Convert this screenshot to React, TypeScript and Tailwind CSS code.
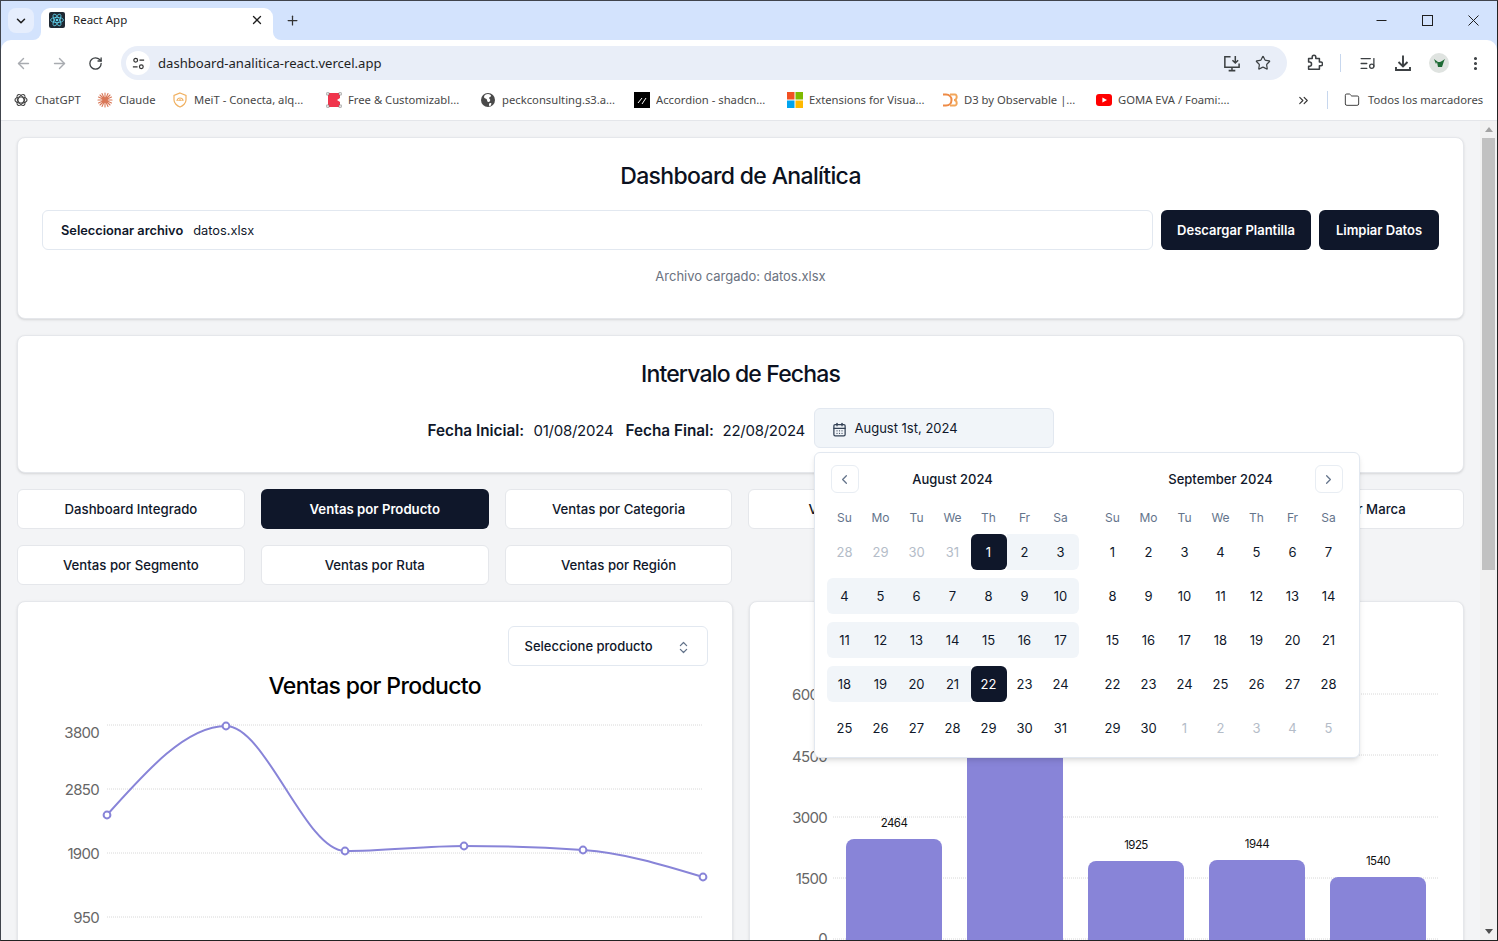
import React from "react";
import { ArrowLeft, ArrowRight, RotateCw, Star, EllipsisVertical, ChevronsRight, Folder, CalendarDays, ChevronLeft, ChevronRight, ChevronsUpDown, X, Plus, ChevronDown, ListMusic } from "lucide-react";

function monotonePath(p: [number, number][]) {
  const n = p.length;
  const d: number[] = [];
  for (let i = 0; i < n - 1; i++) d.push((p[i + 1][1] - p[i][1]) / (p[i + 1][0] - p[i][0]));
  const t: number[] = new Array(n).fill(0);
  for (let i = 1; i < n - 1; i++) {
    if (d[i - 1] * d[i] <= 0) t[i] = 0;
    else {
      const h0 = p[i][0] - p[i - 1][0];
      const h1 = p[i + 1][0] - p[i][0];
      const s = (d[i - 1] * h1 + d[i] * h0) / (h0 + h1);
      t[i] = (Math.sign(d[i - 1]) + Math.sign(d[i])) * Math.min(Math.abs(d[i - 1]), Math.abs(d[i]), 0.5 * Math.abs(s));
    }
  }
  t[0] = (3 * d[0] - t[1]) / 2;
  t[n - 1] = (3 * d[n - 2] - t[n - 2]) / 2;
  let out = `M${p[0][0]},${p[0][1]}`;
  for (let i = 0; i < n - 1; i++) {
    const h = (p[i + 1][0] - p[i][0]) / 3;
    out += `C${p[i][0] + h},${p[i][1] + h * t[i]} ${p[i + 1][0] - h},${p[i + 1][1] - h * t[i + 1]} ${p[i + 1][0]},${p[i + 1][1]}`;
  }
  return out;
}

const ReactIcon = () => (
  <svg viewBox="0 0 16 16" className="w-4 h-4 shrink-0">
    <rect width="16" height="16" rx="2" fill="#1f2933" />
    <g fill="none" stroke="#5fd3ee" strokeWidth="0.8">
      <ellipse cx="8" cy="8" rx="6.5" ry="2.6" />
      <ellipse cx="8" cy="8" rx="6.5" ry="2.6" transform="rotate(60 8 8)" />
      <ellipse cx="8" cy="8" rx="6.5" ry="2.6" transform="rotate(120 8 8)" />
    </g>
    <circle cx="8" cy="8" r="1.3" fill="#5fd3ee" />
  </svg>
);

const GptIcon = () => (
  <svg viewBox="0 0 16 16" className="w-4 h-4 shrink-0" fill="none" stroke="#444" strokeWidth="1.2">
    <ellipse cx="8" cy="8" rx="6" ry="3" />
    <ellipse cx="8" cy="8" rx="6" ry="3" transform="rotate(60 8 8)" />
    <ellipse cx="8" cy="8" rx="6" ry="3" transform="rotate(120 8 8)" />
  </svg>
);
const ClaudeIcon = () => (
  <svg viewBox="0 0 16 16" className="w-4 h-4 shrink-0" stroke="#d97757" strokeWidth="1.1" strokeLinecap="round">
    <path d="M8 1v14M1 8h14M3 3l10 10M13 3L3 13M5 1.5l6 13M11 1.5l-6 13M1.5 5l13 6M14.5 5l-13 6" />
  </svg>
);
const MeitIcon = () => (
  <svg viewBox="0 0 16 16" className="w-4 h-4 shrink-0" fill="none" stroke="#f0b060" strokeWidth="1.2">
    <path d="M8 1l6 2.5v4.5c0 3-3 6-6 7-3-1-6-4-6-7V3.5z" />
    <path d="M5 9a3 3 0 0 1 6 0M6.8 9a1.2 1.2 0 0 1 2.4 0" />
  </svg>
);
const FreeIcon = () => (
  <svg viewBox="0 0 16 16" className="w-4 h-4 shrink-0">
    <path d="M2 1h12v5l-3 2 3 2v5H2z" fill="#f0354c" />
    <g fill="#fff" stroke="#777" strokeWidth="0.6">
      <rect x="0.8" y="0.8" width="2.2" height="2.2" />
      <rect x="13" y="0.8" width="2.2" height="2.2" />
      <rect x="0.8" y="13" width="2.2" height="2.2" />
      <rect x="13" y="13" width="2.2" height="2.2" />
    </g>
  </svg>
);
const GlobeIcon = () => (
  <svg viewBox="0 0 16 16" className="w-4 h-4 shrink-0">
    <circle cx="8" cy="8" r="7" fill="#4a4a4a" />
    <path d="M8 2c2 0 3 1 3 2s-2 1-2 2 2 1 1 3-3 1-3-1-3-1-3-3 2-3 4-3zM10 11c1 0 2 0 1 2s-2 1-2 0 0-2 1-2z" fill="#fff" />
  </svg>
);
const ShadIcon = () => (
  <svg viewBox="0 0 16 16" className="w-4 h-4 shrink-0">
    <rect width="16" height="16" fill="#000" />
    <path d="M4 11l4-5M8 12l4-6" stroke="#fff" strokeWidth="1" />
  </svg>
);
const MsIcon = () => (
  <svg viewBox="0 0 16 16" className="w-4 h-4 shrink-0">
    <rect width="7.5" height="7.5" fill="#f25022" />
    <rect x="8.5" width="7.5" height="7.5" fill="#7fba00" />
    <rect y="8.5" width="7.5" height="7.5" fill="#00a4ef" />
    <rect x="8.5" y="8.5" width="7.5" height="7.5" fill="#ffb900" />
  </svg>
);
const D3Icon = () => (
  <svg viewBox="0 0 16 16" className="w-4 h-4 shrink-0" fill="none" stroke="#ee8a45" strokeWidth="2">
    <path d="M1 2.5h3c3.5 0 5.5 2.5 5.5 5.5s-2 5.5-5.5 5.5H1" />
    <path d="M8 2.5h5c2.4 0 2.4 5.5-1 5.5 3.4 0 3.4 5.5 1 5.5H8" stroke="#f2a65a" />
  </svg>
);
const YtIcon = () => (
  <svg viewBox="0 0 16 16" className="w-4 h-4 shrink-0">
    <rect x="0" y="2" width="16" height="12" rx="3" fill="#f00" />
    <path d="M6.4 5.4L11 8l-4.6 2.6z" fill="#fff" />
  </svg>
);

const bookmarks = [
  { icon: <GptIcon />, label: "ChatGPT", w: "w-[46px]" },
  { icon: <ClaudeIcon />, label: "Claude", w: "w-[37px]" },
  { icon: <MeitIcon />, label: "MeiT - Conecta, alq...", w: "w-[116px]" },
  { icon: <FreeIcon />, label: "Free & Customizabl...", w: "w-[116px]" },
  { icon: <GlobeIcon />, label: "peckconsulting.s3.a...", w: "w-[116px]" },
  { icon: <ShadIcon />, label: "Accordion - shadcn...", w: "w-[115px]" },
  { icon: <MsIcon />, label: "Extensions for Visua...", w: "w-[117px]" },
  { icon: <D3Icon />, label: "D3 by Observable |...", w: "w-[116px]" },
  { icon: <YtIcon />, label: "GOMA EVA / Foami:...", w: "w-[115px]" },
];

function ToolBtn({ children }: { children: React.ReactNode }) {
  return <div className="w-9 h-9 flex items-center justify-center text-[#3c4043] shrink-0">{children}</div>;
}

function BrowserChrome() {
  return (
    <div className="shrink-0 [font-family:'Noto_Sans',sans-serif]">
      <div className="h-[39px] bg-[#d3e3fd] flex items-end relative">
        <div className="ml-[7px] mb-[7px] w-[26px] h-[25px] rounded-lg bg-[#e6eefd] flex items-center justify-center">
          <ChevronDown size={14} strokeWidth={2.6} className="text-[#1f1f1f]" />
        </div>
        <div className="ml-[7px] w-[232px] h-[32px] bg-white rounded-t-[9px] flex items-center pl-2 pr-[9px] pb-2 gap-2 relative">
          <ReactIcon />
          <span className="text-[11.5px] text-[#1f1f1f] flex-1 whitespace-nowrap">React App</span>
          <X size={14} strokeWidth={2.2} className="text-[#1f1f1f]" />
          <div className="absolute bottom-0 -left-2 w-2 h-2 bg-white"><div className="w-2 h-2 bg-[#d3e3fd] rounded-br-lg" /></div>
          <div className="absolute bottom-0 -right-2 w-2 h-2 bg-white"><div className="w-2 h-2 bg-[#d3e3fd] rounded-bl-lg" /></div>
        </div>
        <Plus size={15} strokeWidth={2} className="ml-3 mb-[12px] text-[#333]" />
        <div className="ml-auto self-start flex text-[#1f1f1f]">
          <div className="w-[46px] h-[38px] flex items-center justify-center">
            <svg viewBox="0 0 11 11" className="w-[11px] h-[11px]" stroke="#1f1f1f" strokeWidth="1"><path d="M0.5 5.5h10" /></svg>
          </div>
          <div className="w-[46px] h-[38px] flex items-center justify-center">
            <svg viewBox="0 0 11 11" className="w-[11px] h-[11px]" fill="none" stroke="#1f1f1f" strokeWidth="1"><rect x="0.5" y="0.5" width="10" height="10" /></svg>
          </div>
          <div className="w-[46px] h-[38px] flex items-center justify-center mr-[1px]">
            <svg viewBox="0 0 11 11" className="w-[11px] h-[11px]" stroke="#1f1f1f" strokeWidth="1"><path d="M0.5 0.5l10 10M10.5 0.5l-10 10" /></svg>
          </div>
        </div>
      </div>
      <div className="bg-[#d3e3fd]">
        <div className="h-[42px] bg-white rounded-t-[10px] flex items-center pl-1 pt-1">
          <ToolBtn><ArrowLeft size={17} className="text-[#a8abb0]" /></ToolBtn>
          <ToolBtn><ArrowRight size={17} className="text-[#a8abb0]" /></ToolBtn>
          <ToolBtn><RotateCw size={15} strokeWidth={2.1} /></ToolBtn>
          <div className="ml-2 w-[1166px] h-[34px] rounded-full bg-[#e9eef8] flex items-center pl-[5px] pr-[8px] shrink-0">
            <div className="w-6 h-6 rounded-full bg-white flex items-center justify-center">
              <svg viewBox="0 0 16 16" className="w-[15px] h-[15px]" fill="none" stroke="#333" strokeWidth="1.3">
                <circle cx="5" cy="4.5" r="2" />
                <path d="M9 4.5h5M2 11.5h5" />
                <circle cx="11" cy="11.5" r="2" />
              </svg>
            </div>
            <span className="ml-[8px] pt-[2px] text-[13.1px] text-[#1f1f1f] whitespace-nowrap">dashboard-analitica-react.vercel.app</span>
            <div className="ml-auto flex items-center">
              <div className="w-8 flex justify-center text-[#3c4043]">
                <svg viewBox="0 0 20 20" className="w-[19px] h-[19px]" fill="none" stroke="#3c4043" strokeWidth="1.6">
                  <path d="M9 3H3v11h15V10M7 17.5h7M10.5 14v3.5" />
                  <path d="M14 2v7M11 6.5l3 3 3-3" />
                </svg>
              </div>
              <div className="w-8 flex justify-center text-[#3c4043]"><Star size={16} strokeWidth={1.8} /></div>
            </div>
          </div>
          <div className="ml-[9px]">
            <ToolBtn>
              <svg viewBox="0 0 20 20" className="w-[18px] h-[18px]" fill="none" stroke="#3c4043" strokeWidth="1.7" strokeLinejoin="round">
                <path d="M4 5h4V3.5a2 2 0 0 1 4 0V5h4v4h1.5a2 2 0 0 1 0 4H16v4H4v-3.5h1a2 2 0 0 0 0-4.5H4z" />
              </svg>
            </ToolBtn>
          </div>
          <div className="ml-[8px] mr-[8px] w-px h-[18px] bg-[#c7d7ee]" />
          <ToolBtn><ListMusic size={17} strokeWidth={1.8} /></ToolBtn>
          <ToolBtn>
            <svg viewBox="0 0 20 20" className="w-5 h-5" fill="none" stroke="#3c4043" strokeWidth="1.9">
              <path d="M10 2.5v10.5M5.5 9l4.5 4.5L14.5 9M3 14v3h14v-3" />
            </svg>
          </ToolBtn>
          <ToolBtn>
            <svg viewBox="0 0 20 20" className="w-5 h-5">
              <circle cx="10" cy="10" r="10" fill="#dfe3e0" />
              <path d="M5 6l2 5 1-2 1 5h4l2-6 1-2-3 2-2 1-2 0z" fill="#1e6b35" />
            </svg>
          </ToolBtn>
          <ToolBtn><EllipsisVertical size={17} strokeWidth={2.4} /></ToolBtn>
        </div>
      </div>
      <div className="h-[39px] bg-white border-b border-[#e4e6ea] flex items-center pl-3 pb-[2px] text-[11.25px] text-[#474747]">
        <div className="flex items-center gap-4">
          {bookmarks.map((b) => (
            <div key={b.label} className="flex items-center gap-[6px] shrink-0">
              {b.icon}
              <span className={`${b.w} whitespace-nowrap overflow-hidden`}>{b.label}</span>
            </div>
          ))}
        </div>
        <ChevronsRight size={15} strokeWidth={1.8} className="ml-[63px] text-[#333]" />
        <div className="ml-[16px] w-px h-[18px] bg-[#c7d7ee]" />
        <Folder size={16} strokeWidth={1.4} className="ml-[16px] text-[#333]" />
        <span className="ml-2 whitespace-nowrap">Todos los marcadores</span>
      </div>
    </div>
  );
}

const aug = [
  [28, 29, 30, 31, 1, 2, 3],
  [4, 5, 6, 7, 8, 9, 10],
  [11, 12, 13, 14, 15, 16, 17],
  [18, 19, 20, 21, 22, 23, 24],
  [25, 26, 27, 28, 29, 30, 31],
];
const sep = [
  [1, 2, 3, 4, 5, 6, 7],
  [8, 9, 10, 11, 12, 13, 14],
  [15, 16, 17, 18, 19, 20, 21],
  [22, 23, 24, 25, 26, 27, 28],
  [29, 30, 1, 2, 3, 4, 5],
];
const weekdays = ["Su", "Mo", "Tu", "We", "Th", "Fr", "Sa"];

function Month({ title, rows, kind }: { title: string; rows: number[][]; kind: "aug" | "sep" }) {
  return (
    <div className="w-[252px]">
      <div className="h-7 pt-[2px] flex items-center justify-center text-[13px] font-medium text-[#0f172a]">{title}</div>
      <div className="grid grid-cols-7 mt-[14px] h-[20px] pt-[1px] items-center">
        {weekdays.map((w) => (
          <div key={w} className="text-center text-[12px] text-[#64748b]">{w}</div>
        ))}
      </div>
      <div className="mt-[7px] flex flex-col gap-2">
        {rows.map((r, ri) => (
          <div key={ri} className="grid grid-cols-7">
            {r.map((d, i) => {
              const outside = kind === "aug" ? ri === 0 && i < 4 : ri === 4 && i > 1;
              const endpoint = kind === "aug" && ((ri === 0 && i === 4) || (ri === 3 && i === 4));
              const inRange = kind === "aug" && !outside && ((ri === 0 && i > 4) || ri === 1 || ri === 2 || (ri === 3 && i < 4));
              const first = inRange && i === 0;
              const last = inRange && i === 6;
              return (
                <div
                  key={i}
                  className={`h-9 pt-[2px] flex items-center justify-center text-[13px] ${
                    endpoint
                      ? "bg-[#0f172a] text-white rounded-md"
                      : inRange
                      ? `bg-[#f1f5f9] text-[#0f172a] ${first ? "rounded-l-md" : ""} ${last ? "rounded-r-md" : ""}`
                      : outside
                      ? "text-[#b4bcc8]"
                      : "text-[#0f172a]"
                  }`}
                >
                  {d}
                </div>
              );
            })}
          </div>
        ))}
      </div>
    </div>
  );
}

function DatePopover() {
  return (
    <div className="absolute left-0 top-[44px] z-20 w-[546px] h-[306px] bg-white border border-[#e2e8f0] rounded-md shadow-md p-3 flex gap-4">
      <Month title="August 2024" rows={aug} kind="aug" />
      <Month title="September 2024" rows={sep} kind="sep" />
      <div className="absolute left-4 top-3 w-7 h-7 border border-[#e8edf3] rounded-md flex items-center justify-center text-[#64748b]"><ChevronLeft size={15} /></div>
      <div className="absolute right-4 top-3 w-7 h-7 border border-[#e8edf3] rounded-md flex items-center justify-center text-[#64748b]"><ChevronRight size={15} /></div>
    </div>
  );
}

const tabs = [
  "Dashboard Integrado",
  "Ventas por Producto",
  "Ventas por Categoria",
  "Ventas por Canal",
  "",
  "Ventas por Marca",
  "Ventas por Segmento",
  "Ventas por Ruta",
  "Ventas por Región",
];

const linePts: [number, number][] = [[107, 815], [226, 726], [345, 851], [464, 846], [583, 850], [703, 877]];
const grid = "#d8d8d8";

function LineChart() {
  return (
    <svg viewBox="18 710 714 240" className="block w-[714px] h-[240px]">
      {[725, 789, 853, 917].map((y) => (
        <line key={y} x1="107" x2="702" y1={y} y2={y} stroke={grid} strokeDasharray="1 1" />
      ))}
      {[["3800", 738], ["2850", 795], ["1900", 859], ["950", 923]].map(([t, y]) => (
        <text key={t} x="99" y={y} textAnchor="end" fontSize="15" letterSpacing="-0.7" fill="#666">{t}</text>
      ))}
      <path d={monotonePath(linePts)} fill="none" stroke="#8884d8" strokeWidth="2" />
      {linePts.map(([x, y]) => (
        <circle key={x} cx={x} cy={y} r="3.4" fill="#fff" stroke="#8884d8" strokeWidth="2" />
      ))}
    </svg>
  );
}

const bars = [
  { x: 846, top: 839, label: "2464", ly: 827 },
  { x: 967, top: 700, label: "", ly: 0 },
  { x: 1088, top: 861, label: "1925", ly: 849 },
  { x: 1209, top: 860, label: "1944", ly: 848 },
  { x: 1330, top: 877, label: "1540", ly: 865 },
];

function BarChart() {
  return (
    <svg viewBox="750 602 713 340" className="block w-[713px] h-[340px]">
      {[694, 755, 817, 878, 939].map((y) => (
        <line key={y} x1="833" x2="1439" y1={y} y2={y} stroke={grid} strokeDasharray="1 1" />
      ))}
      {[["6000", 700], ["4500", 762], ["3000", 823], ["1500", 884], ["0", 944]].map(([t, y]) => (
        <text key={t} x="827" y={y} textAnchor="end" fontSize="15" letterSpacing="-0.7" fill="#666">{t}</text>
      ))}
      {bars.map((b) => (
        <g key={b.x}>
          <rect x={b.x} y={b.top} width="96" height={960 - b.top} rx="8" fill="#8884d8" />
          {b.label && <text x={b.x + 48} y={b.ly} textAnchor="middle" fontSize="11.5" letterSpacing="-0.6" fill="#111">{b.label}</text>}
        </g>
      ))}
    </svg>
  );
}

const card = "bg-white border border-[#e5e7eb] rounded-lg shadow-sm";
const title = "text-[23px] font-medium text-center h-8 leading-8 text-[#0b1120]";

export default function App() {
  return (
    <div className="w-[1498px] h-[941px] overflow-hidden flex flex-col bg-[#f3f4f6] border border-[#40444c] border-r-[#222] border-b-[#222]">
      <BrowserChrome />
      <div className="flex flex-1 min-h-0 [font-family:Inter,sans-serif] text-[#0f172a]">
        <main className="flex-1 min-w-0 p-4 flex flex-col gap-4 overflow-hidden">
          <section className={`${card} px-6 pt-[22px] pb-8 shrink-0`}>
            <h1 className={`${title} tracking-[-0.65px] mb-[18px]`}>Dashboard de Analítica</h1>
            <div className="flex gap-2">
              <div className="flex-1 h-10 border border-[#e2e8f0] rounded-md flex items-center pl-[18px] pt-[2px] text-[12.8px]">
                <span className="font-semibold mr-[10px]">Seleccionar archivo</span>
                <span>datos.xlsx</span>
              </div>
              <button className="w-[150px] h-10 pt-[2px] rounded-md bg-[#0f172a] text-white text-[13px] font-semibold">Descargar Plantilla</button>
              <button className="w-[120px] h-10 pt-[2px] rounded-md bg-[#0f172a] text-white text-[13px] font-semibold">Limpiar Datos</button>
            </div>
            <p className="mt-4 text-center text-[13px] leading-5 text-[#6b7280]">Archivo cargado: datos.xlsx</p>
          </section>

          <section className={`${card} px-6 pt-[22px] pb-6 shrink-0`}>
            <h2 className={`${title} tracking-[-0.85px] mb-[18px]`}>Intervalo de Fechas</h2>
            <div className="flex justify-center items-center text-[15px]">
              <span className="w-[96px] whitespace-nowrap font-semibold mt-[6px] text-[15.3px]">Fecha Inicial:</span>
              <span className="w-[81px] ml-[10px] whitespace-nowrap mt-[6px] tracking-[-0.25px]">01/08/2024</span>
              <span className="w-[87px] ml-[11px] whitespace-nowrap font-semibold mt-[6px] text-[15.3px]">Fecha Final:</span>
              <span className="w-[81px] ml-[10px] whitespace-nowrap mt-[6px] tracking-[-0.25px]">22/08/2024</span>
              <div className="relative ml-[10px]">
                <div className="w-[240px] h-10 pt-[2px] bg-[#f1f5f9] border border-[#e2e8f0] rounded-md flex items-center pl-[17px] text-[13px]">
                  <CalendarDays size={15} className="mr-2 text-[#334155]" />
                  August 1st, 2024
                </div>
                <DatePopover />
              </div>
            </div>
          </section>

          <div className="grid grid-cols-6 gap-4 shrink-0">
            {tabs.map((t, i) => (
              <div
                key={i}
                className={`h-10 pt-[2px] rounded-md flex items-center justify-center text-[13.2px] ${
                  i === 1 ? "bg-[#0f172a] text-white font-semibold" : "bg-white border border-[#e5e7eb] font-medium"
                }`}
              >
                {t}
              </div>
            ))}
          </div>

          <div className="grid grid-cols-2 gap-4 shrink-0">
            <section className={`${card} h-[400px] overflow-hidden`}>
              <div className="flex justify-end pt-6 pr-6">
                <div className="w-[200px] h-10 pt-[2px] border border-[#e2e8f0] rounded-md flex items-center justify-between pl-4 pr-4 text-[13px] font-medium">
                  Seleccione producto
                  <ChevronsUpDown size={15} className="text-[#64748b]" />
                </div>
              </div>
              <h3 className="mt-1 text-[23px] tracking-[-0.65px] font-medium text-center text-black h-8 leading-8">Ventas por Producto</h3>
              <div className="mt-2"><LineChart /></div>
            </section>
            <section className={`${card} h-[400px] overflow-hidden`}>
              <BarChart />
            </section>
          </div>
        </main>
        <aside className="w-[17px] shrink-0 bg-[#f1f1f1] flex flex-col items-center">
          <div className="h-[17px] flex items-center justify-center">
            <div className="w-0 h-0 border-l-4 border-r-4 border-b-[5px] border-l-transparent border-r-transparent border-b-[#a3a3a3]" />
          </div>
          <div className="w-[13px] h-[432px] bg-[#c1c1c1]" />
          <div className="flex-1" />
          <div className="h-[17px] flex items-center justify-center">
            <div className="w-0 h-0 border-l-4 border-r-4 border-t-[5px] border-l-transparent border-r-transparent border-t-[#505050]" />
          </div>
        </aside>
      </div>
    </div>
  );
}
